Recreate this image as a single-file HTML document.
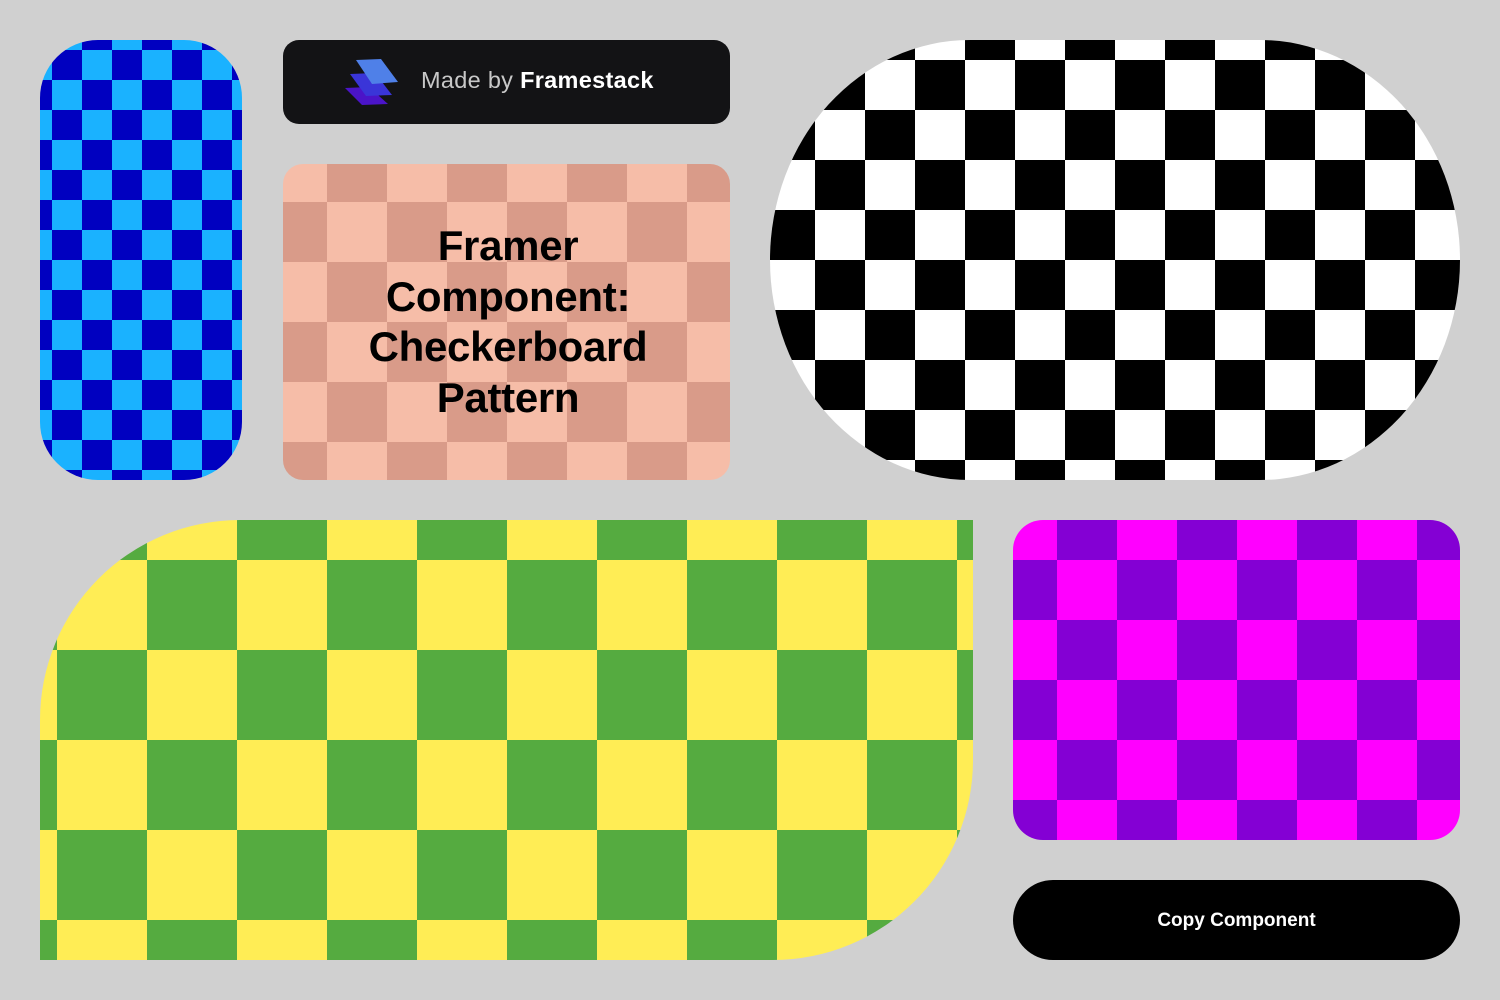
<!DOCTYPE html>
<html><head><meta charset="utf-8"><style>
body{margin:0;width:1500px;height:1000px;background:#d0d0d0;position:relative;overflow:hidden;font-family:"Liberation Sans",sans-serif}
.p{position:absolute;overflow:hidden}
.cb{background-image:conic-gradient(var(--a) 0 25%,var(--b) 0 50%,var(--a) 0 75%,var(--b) 0)}
</style></head><body>
<div class="p cb" style="left:40px;top:40px;width:202px;height:440px;border-radius:58px;--a:#1ab2ff;--b:#0000c0;background-size:60px 60px;background-position:12px 10px"></div>
<div class="p" style="left:283px;top:40px;width:447px;height:84px;border-radius:16px;background:#131315">
<svg style="position:absolute;left:0;top:0" width="140" height="84" viewBox="283 40 140 84">
<polygon points="345,88 369,87 388,104 362,105" fill="#4b14c8"/>
<polygon points="350,74 375,73 392,95 366,96" fill="#3a35d8"/>
<polygon points="356,60 381,59 398,82 372,84" fill="#4f80e8"/>
</svg>
<div style="position:absolute;left:138px;top:27px;font-size:23.5px;color:#c8c8c8;white-space:nowrap;letter-spacing:0.3px">Made by <b style="color:#fff">Framestack</b></div>
</div>
<div class="p cb" style="left:283px;top:164px;width:447px;height:316px;border-radius:20px;--a:#d99b89;--b:#f6bda8;background-size:120px 120px;background-position:44px 38px">
<div style="position:absolute;left:-20px;right:-20px;top:57px;text-align:center;font-weight:bold;font-size:42px;line-height:50.5px;color:#000;padding-left:3px;letter-spacing:-0.3px">Framer<br>Component:<br>Checkerboard<br>Pattern</div>
</div>
<div class="p cb" style="left:770px;top:40px;width:690px;height:440px;border-radius:200px/220px;--a:#fff;--b:#000;background-size:100px 100px;background-position:45px 20px"></div>
<div class="p cb" style="left:40px;top:520px;width:933px;height:440px;border-radius:200px 0 200px 0;--a:#ffed55;--b:#55ab40;background-size:180px 180px;background-position:107px 40px"></div>
<div class="p cb" style="left:1013px;top:520px;width:447px;height:320px;border-radius:30px;--a:#8400d4;--b:#ff00ff;background-size:120px 120px;background-position:44px 40px"></div>
<div class="p" style="left:1013px;top:880px;width:447px;height:80px;border-radius:40px;background:#000;color:#fff;font-weight:bold;font-size:19px;text-align:center;line-height:82px">Copy Component</div>
</body></html>
